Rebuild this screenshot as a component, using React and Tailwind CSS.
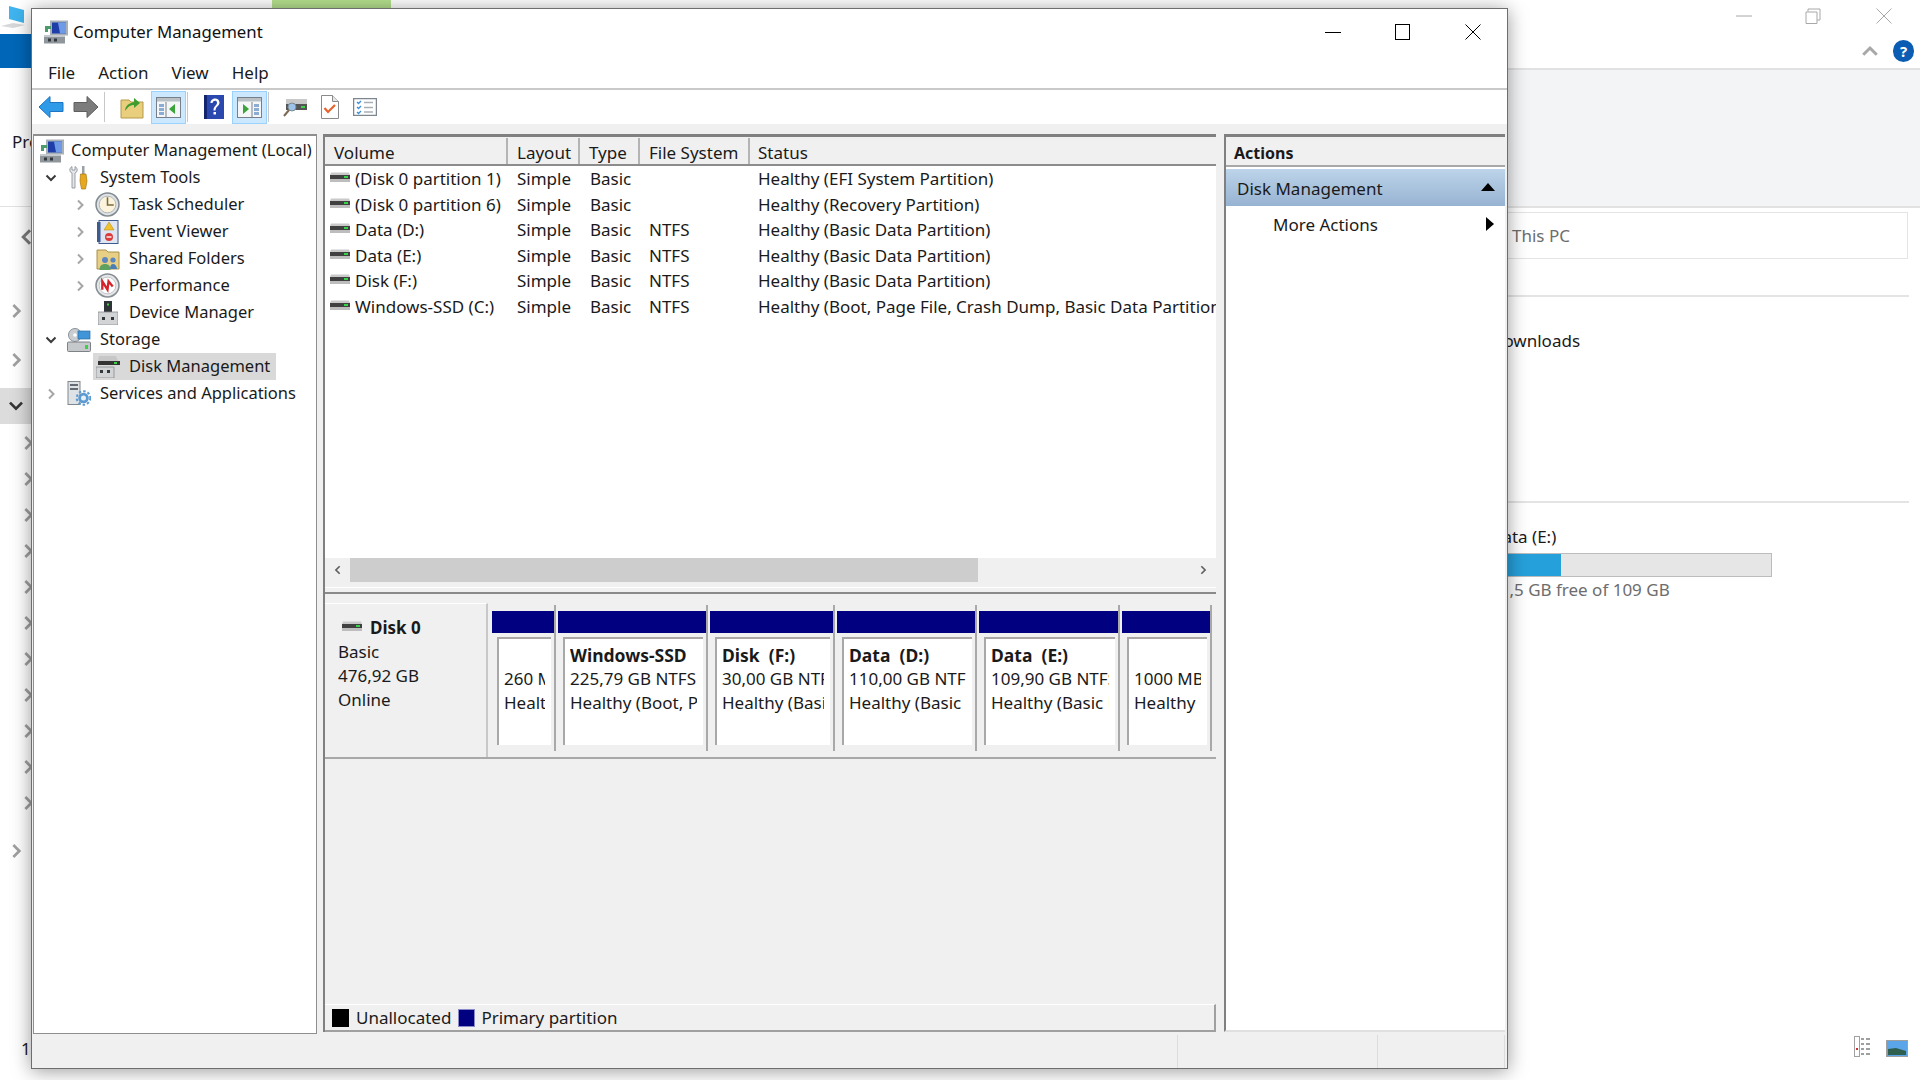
import React from 'react';

const Chevron = ({ dir = 'right', className = 'text-[#a6a6a6]', size = 12 }) => {
  const points = {
    right: '4,1.5 8.5,6 4,10.5',
    left: '8,1.5 3.5,6 8,10.5',
    down: '1.5,3.5 6,8 10.5,3.5',
    up: '1.5,8.5 6,4 10.5,8.5',
  };
  return (
    <svg width={size} height={size} viewBox="0 0 12 12" className={className}>
      <polyline points={points[dir]} fill="none" stroke="currentColor" strokeWidth="2" />
    </svg>
  );
};

const HddIcon = () => (
  <svg width="20" height="10" viewBox="0 0 20 10" className="shrink-0">
    <path d="M1 0.5h18l1 2.5H0z" fill="#c9c9c9" />
    <rect x="0" y="3" width="20" height="4" fill="#404040" />
    <rect x="0" y="7" width="20" height="3" fill="#bdbdbd" />
    <rect x="14" y="4" width="4" height="2" fill="#35d24a" />
  </svg>
);

const ComputerIcon = ({ size = 24 }) => (
  <svg width={size} height={size} viewBox="0 0 24 24" className="shrink-0">
    <rect x="6" y="0.5" width="18" height="15" fill="#a9b1b8" />
    <rect x="8" y="2.5" width="14" height="11" fill="#1f3ea8" />
    <path d="M14 2.5h8v11h-6z" fill="#6f9be6" />
    <path d="M1 6h6v3H4v3H1z" fill="#4d9a6a" />
    <rect x="0" y="15" width="21" height="8.5" fill="#8f969c" />
    <rect x="0" y="15" width="21" height="2" fill="#c4c9cd" />
    <rect x="4" y="18.5" width="3" height="3" fill="#33383c" />
    <rect x="10" y="18.5" width="3" height="3" fill="#33383c" />
  </svg>
);

const ArrowIcon = ({ dir }) => (
  <svg width="26" height="24" viewBox="0 0 26 24">
    {dir === 'left' ? (
      <path d="M1 12L12 1.5v6h13v9H12v6z" fill="#2f9be8" stroke="#1d74c4" strokeWidth="1" />
    ) : (
      <path d="M25 12L14 1.5v6H1v9h13v6z" fill="#7c7c7c" stroke="#5f5f5f" strokeWidth="1" />
    )}
  </svg>
);

const FolderUpIcon = () => (
  <svg width="24" height="24" viewBox="0 0 24 24">
    <path d="M1 5h8l2 2h12v16H1z" fill="#e9cf7d" stroke="#b59a4b" strokeWidth="1" />
    <path d="M5 16c0-5 4-8 9-9V3l6 5-6 5v-3c-4 0-6 2-9 6z" fill="#3e9d2f" />
  </svg>
);

const PaneIcon = ({ side }) => (
  <svg width="25" height="21" viewBox="0 0 25 21">
    <rect x="0.5" y="0.5" width="24" height="20" fill="#f4f6f7" stroke="#77808a" />
    <rect x="1" y="1" width="23" height="3.5" fill="#b9c0c6" />
    {side === 'left' ? (
      <>
        <rect x="3" y="7" width="5" height="3" fill="#8dacd2" />
        <rect x="3" y="11" width="5" height="3" fill="#8dacd2" />
        <rect x="3" y="15" width="5" height="3" fill="#8dacd2" />
        <line x1="10" y1="5" x2="10" y2="20" stroke="#77808a" />
        <path d="M19 7v10l-6-5z" fill="#3aa33a" />
      </>
    ) : (
      <>
        <rect x="17" y="7" width="5" height="3" fill="#8dacd2" />
        <rect x="17" y="11" width="5" height="3" fill="#8dacd2" />
        <rect x="17" y="15" width="5" height="3" fill="#8dacd2" />
        <line x1="15" y1="5" x2="15" y2="20" stroke="#77808a" />
        <path d="M6 7v10l6-5z" fill="#3aa33a" />
      </>
    )}
  </svg>
);

const HelpIcon = () => (
  <svg width="20" height="24" viewBox="0 0 20 24">
    <rect width="20" height="24" fill="#2a48ad" />
    <rect x="0" y="0" width="3" height="24" fill="#12256e" />
    <path d="M6.5 8c0-6 9-6 9-.5 0 4-4 3.500-4 8h-2c0-5 3.500-4.500 3.500-8 0-2.500-4-2.500-4.500.5z" fill="#fff" />
    <rect x="9.500" y="17" width="2.500" height="2.500" fill="#fff" />
  </svg>
);

const DiskScanIcon = () => (
  <svg width="24" height="22" viewBox="0 0 24 22">
    <rect x="3" y="3" width="21" height="5" fill="#c9c9c9" />
    <rect x="3" y="8" width="21" height="6" fill="#555" />
    <rect x="18" y="10" width="4" height="2" fill="#3fd04a" />
    <circle cx="9" cy="11" r="4" fill="#9cc4e8" stroke="#7b8a96" />
    <line x1="6" y1="14" x2="1" y2="20" stroke="#7d6a52" strokeWidth="2" />
  </svg>
);

const DocCheckIcon = () => (
  <svg width="18" height="24" viewBox="0 0 18 24">
    <path d="M0.500 0.500h11l6 6v17H0.500z" fill="#fff" stroke="#8a8a8a" />
    <path d="M11.500 0.500v6h6" fill="#e6e6e6" stroke="#8a8a8a" />
    <path d="M3.500 13l3.500 4 7-7" fill="none" stroke="#e8622c" strokeWidth="2.200" />
  </svg>
);

const ListCheckIcon = () => (
  <svg width="24" height="18" viewBox="0 0 24 18">
    <rect x="0.500" y="0.500" width="23" height="17" fill="#fff" stroke="#7d868f" strokeWidth="1.500" />
    <path d="M4 4l1.500 1.500L8 3M4 9l1.500 1.500L8 8M4 14l1.500 1.500L8 13" fill="none" stroke="#3b8fd8" strokeWidth="1.300" />
    <path d="M11 4.500h9M11 9.500h9M11 14h9" stroke="#a8b0b6" strokeWidth="1.300" />
  </svg>
);

const ToolsIcon = () => (
  <svg width="20" height="25" viewBox="0 0 20 25" className="shrink-0">
    <path d="M3 1.500a4 4 0 0 0-2 5l2 1.500v15h3V8l2-1.500a4 4 0 0 0-2-5V5H3z" fill="#e4e6e8" stroke="#848b92" strokeWidth="0.800" />
    <rect x="13" y="1" width="2.500" height="8" fill="#9aa0a6" />
    <path d="M11.500 9h5.500l1 7-1.500 8h-4l-1.500-8z" fill="#e8a81e" stroke="#a8770f" strokeWidth="0.700" />
  </svg>
);

const ClockIcon = () => (
  <svg width="25" height="25" viewBox="0 0 24 24" className="shrink-0">
    <circle cx="12" cy="12" r="11" fill="#dfe3e6" stroke="#838b92" strokeWidth="1.500" />
    <circle cx="12" cy="12" r="8" fill="#fbf3dc" stroke="#a4abb0" strokeWidth="0.800" />
    <path d="M12 5v7.500h6" fill="none" stroke="#7a6a3a" strokeWidth="1.500" />
  </svg>
);

const EventIcon = () => (
  <svg width="22" height="24" viewBox="0 0 22 24" className="shrink-0">
    <rect x="2" y="0.500" width="19" height="23" fill="#dfe6f2" stroke="#3e5a8e" />
    <rect x="0" y="2" width="3.500" height="20" fill="#3e5a8e" />
    <path d="M12 2l5 8H7z" fill="#f2c22c" stroke="#a8820f" strokeWidth="0.500" />
    <circle cx="12" cy="17" r="4" fill="#dc3b3b" />
    <rect x="9.500" y="16.300" width="5" height="1.400" fill="#fff" />
  </svg>
);

const SharedIcon = () => (
  <svg width="24" height="24" viewBox="0 0 24 24" className="shrink-0">
    <path d="M1 3h9l2 2h11v17H1z" fill="#e7cf85" stroke="#a8904a" />
    <circle cx="9" cy="13" r="3" fill="#5b86c0" />
    <path d="M3.500 23c0-4 2-6 5.500-6s5.500 2 5.500 6z" fill="#5fa25f" />
    <circle cx="17" cy="13" r="2.600" fill="#5b86c0" />
    <path d="M14 22c0-3 1-5 3-5s4 2 4 5z" fill="#4a7fb5" />
  </svg>
);

const PerfIcon = () => (
  <svg width="25" height="25" viewBox="0 0 24 24" className="shrink-0">
    <circle cx="12" cy="12" r="11" fill="#e4e6e8" stroke="#868d93" strokeWidth="1.500" />
    <circle cx="12" cy="12" r="8" fill="#fff" stroke="#b0b5b9" strokeWidth="0.700" />
    <path d="M7 16V8l5 8 1-8 4 5" fill="none" stroke="#d4232a" strokeWidth="2.200" />
  </svg>
);

const DeviceIcon = () => (
  <svg width="20" height="24" viewBox="0 0 20 24" className="shrink-0">
    <rect x="6" y="0" width="8" height="11" fill="#2f3338" />
    <rect x="9" y="2.500" width="2" height="2" fill="#3fd04a" />
    <path d="M0 11h20v13H0z" fill="#d2d4d6" stroke="#868a8e" strokeWidth="0.800" />
    <rect x="4" y="16" width="3" height="3" fill="#33383c" />
    <rect x="13" y="16" width="3" height="3" fill="#33383c" />
  </svg>
);

const StorageIcon = () => (
  <svg width="24" height="24" viewBox="0 0 24 24" className="shrink-0">
    <circle cx="8" cy="7" r="6.500" fill="#c9ced2" stroke="#8a9096" />
    <circle cx="8" cy="7" r="1.800" fill="#fff" />
    <rect x="11" y="3" width="12" height="8" fill="#3f95d8" stroke="#2a6ea6" strokeWidth="0.700" />
    <rect x="0.500" y="14" width="23" height="9.500" rx="1" fill="#c6c9cc" stroke="#7d8287" />
    <rect x="18" y="17" width="3" height="4" fill="#3fd04a" />
  </svg>
);

const DiskMgmtIcon = () => (
  <svg width="24" height="22" viewBox="0 0 24 22" className="shrink-0">
    <path d="M3 0h17l2 5H2z" fill="#c7c7c7" />
    <rect x="2" y="5" width="22" height="4" fill="#333" />
    <rect x="18" y="6" width="3" height="2" fill="#3fd04a" />
    <path d="M0 11h18v11H0z" fill="#d2d4d6" stroke="#868a8e" strokeWidth="0.800" />
    <rect x="4" y="14" width="3" height="3" fill="#33383c" />
    <rect x="11" y="14" width="3" height="3" fill="#33383c" />
  </svg>
);

const ServicesIcon = () => (
  <svg width="24" height="25" viewBox="0 0 24 25" className="shrink-0">
    <rect x="1" y="0.500" width="12" height="23" fill="#dfe3e6" stroke="#80878d" />
    <rect x="3" y="3" width="8" height="2" fill="#646b72" />
    <rect x="3" y="7" width="8" height="2" fill="#646b72" />
    <circle cx="16.500" cy="17" r="6.800" fill="none" stroke="#5c9ad2" strokeWidth="2" strokeDasharray="2.500 2" />
    <circle cx="16.500" cy="17" r="5.300" fill="#5c9ad2" />
    <circle cx="16.500" cy="17" r="2.500" fill="#e6f0f8" />
  </svg>
);

const TreeRow = ({ level, expander, icon, label, selected }) => {
  const indent = { 1: 'pl-[11px]', 2: 'pl-[40px]' }[level];
  return (
    <div className={`flex h-[27px] items-center ${indent}`}>
      <span className="flex w-[12px] shrink-0 justify-center">
        {expander === 'open' && <Chevron dir="down" className="text-[#3a3a3a]" />}
        {expander === 'closed' && <Chevron dir="right" />}
      </span>
      <div className={`ml-[7px] flex h-[27px] items-center pr-[6px] ${selected ? 'bg-[#d9d9d9]' : ''}`}>
        <span className="flex w-[28px] shrink-0 justify-center pl-[1px]">{icon}</span>
        <span className="ml-[8px] whitespace-nowrap">{label}</span>
      </div>
    </div>
  );
};

const TreePane = () => (
  <div className="h-[900px] w-[284px] shrink-0 overflow-hidden border border-t-2 border-[#8f8f8f] bg-white pt-[1px] text-[16.5px]">
    <div className="flex h-[27px] items-center pl-[6px]">
      <ComputerIcon />
      <span className="ml-[7px] whitespace-nowrap">Computer Management (Local)</span>
    </div>
    <TreeRow level={1} expander="open" icon={<ToolsIcon />} label="System Tools" />
    <TreeRow level={2} expander="closed" icon={<ClockIcon />} label="Task Scheduler" />
    <TreeRow level={2} expander="closed" icon={<EventIcon />} label="Event Viewer" />
    <TreeRow level={2} expander="closed" icon={<SharedIcon />} label="Shared Folders" />
    <TreeRow level={2} expander="closed" icon={<PerfIcon />} label="Performance" />
    <TreeRow level={2} icon={<DeviceIcon />} label="Device Manager" />
    <TreeRow level={1} expander="open" icon={<StorageIcon />} label="Storage" />
    <TreeRow level={2} icon={<DiskMgmtIcon />} label="Disk Management" selected />
    <TreeRow level={1} expander="closed" icon={<ServicesIcon />} label="Services and Applications" />
  </div>
);

const volumes = [
  ['(Disk 0 partition 1)', '', 'Healthy (EFI System Partition)'],
  ['(Disk 0 partition 6)', '', 'Healthy (Recovery Partition)'],
  ['Data (D:)', 'NTFS', 'Healthy (Basic Data Partition)'],
  ['Data (E:)', 'NTFS', 'Healthy (Basic Data Partition)'],
  ['Disk (F:)', 'NTFS', 'Healthy (Basic Data Partition)'],
  ['Windows-SSD (C:)', 'NTFS', 'Healthy (Boot, Page File, Crash Dump, Basic Data Partition)'],
];

const partitions = [
  { width: 'w-[66px]', name: '', size: '260 MB', status: 'Healthy (EFI System Partition)' },
  { width: 'w-[152px]', name: 'Windows-SSD', size: '225,79 GB NTFS', status: 'Healthy (Boot, Page File, Crash Dump)' },
  { width: 'w-[127px]', name: 'Disk  (F:)', size: '30,00 GB NTFS', status: 'Healthy (Basic Data Partition)' },
  { width: 'w-[142px]', name: 'Data  (D:)', size: '110,00 GB NTFS', status: 'Healthy (Basic Data Partition)' },
  { width: 'w-[143px]', name: 'Data  (E:)', size: '109,90 GB NTFS', status: 'Healthy (Basic Data Partition)' },
  { width: 'w-[92px]', name: '', size: '1000 MB', status: 'Healthy' },
];

const headerCell = 'flex h-[26px] items-center border-r-2 border-[#b4b4b4] pl-[9px] pt-[2px]';

const VolumeList = () => (
  <div className="flex h-[421px] flex-col overflow-hidden bg-white">
    <div className="grid shrink-0 grid-cols-[183px_72px_60px_110px_1fr] border-b-2 border-[#8c8c8c] bg-[#f0f0f0] pt-[1px] leading-none">
      <div className={headerCell}>Volume</div>
      <div className={headerCell}>Layout</div>
      <div className={headerCell}>Type</div>
      <div className={headerCell}>File System</div>
      <div className="flex h-[26px] items-center pl-[8px] pt-[2px]">Status</div>
    </div>
    <div>
      {volumes.map(([name, fs, status]) => (
        <div key={name} className="grid h-[25.5px] grid-cols-[183px_72px_60px_110px_1fr] items-center whitespace-nowrap">
          <div className="flex items-center pl-[5px]">
            <span className="-mt-[3px]"><HddIcon /></span>
            <span className="ml-[5px]">{name}</span>
          </div>
          <div className="pl-[9px]">Simple</div>
          <div className="pl-[10px]">Basic</div>
          <div className="pl-[9px]">{fs}</div>
          <div className="pl-[8px]">{status}</div>
        </div>
      ))}
    </div>
  </div>
);

const ScrollBar = () => (
  <div className="shrink-0 bg-[#f0f0f0]">
    <div className="flex h-[24px] items-center">
      <span className="flex w-[25px] justify-center"><Chevron dir="left" className="text-[#606060]" size={10} /></span>
      <div className="h-[24px] w-[628px] bg-[#cdcdcd]" />
      <span className="ml-auto flex w-[26px] justify-center"><Chevron dir="right" className="text-[#606060]" size={10} /></span>
    </div>
    <div className="h-[5px]" />
    <div className="h-[5px] border-t border-white" />
    <div className="h-[2px] bg-[#8a8a8a]" />
  </div>
);

const PartitionCell = ({ width, name, size, status }) => (
  <div className={`flex shrink-0 flex-col border-r-2 border-[#a9a9a9] pt-[6px] ${width}`}>
    <div className="ml-[2px] h-[22px] shrink-0 bg-[#000080]" />
    <div className="mb-[6px] ml-[7px] mr-[3px] mt-[4px] flex-1 border-l-2 border-t-2 border-[#a8a8a8] bg-white pl-[5px] pr-[6px] pt-[4px]">
      <div className="overflow-hidden whitespace-pre leading-[24px]">
        <div className="h-[24px] text-[17.5px] font-bold">{name}</div>
        <div>{size}</div>
        <div>{status}</div>
      </div>
    </div>
  </div>
);

const DiskView = () => (
  <div className="flex flex-1 flex-col bg-[#f0f0f0]">
    <div className="mt-[9px] flex h-[156px] shrink-0 border-b-2 border-[#a8a8a8]">
      <div className="w-[163px] shrink-0 border-r-2 border-t border-r-[#c8c8c8] border-t-white pl-[13px] pt-[12px] leading-[24px]">
        <div className="flex items-center">
          <span className="ml-[4px] -mt-[5px]"><HddIcon /></span>
          <span className="ml-[8px] font-bold">Disk 0</span>
        </div>
        <div>Basic</div>
        <div>476,92 GB</div>
        <div>Online</div>
      </div>
      <div className="flex h-[148px] pl-[2px] pt-[2px]">
        {partitions.map((p, i) => (
          <PartitionCell key={i} {...p} />
        ))}
      </div>
    </div>
    <div className="flex-1" />
    <div className="flex h-[28px] shrink-0 items-center border-b-2 border-r-2 border-t border-b-[#a0a0a0] border-r-[#a0a0a0] border-t-white pl-[7px]">
      <span className="h-[18px] w-[17px] bg-black" />
      <span className="ml-[7px]">Unallocated</span>
      <span className="ml-[7px] h-[18px] w-[17px] border border-[#8a8ac8] bg-[#000080]" />
      <span className="ml-[6px]">Primary partition</span>
    </div>
  </div>
);

const MiddlePane = () => (
  <div className="ml-[6px] flex h-[898px] w-[893px] shrink-0 flex-col overflow-hidden border-l-2 border-t-[3px] border-[#808080]">
    <VolumeList />
    <ScrollBar />
    <DiskView />
  </div>
);

const ActionsPane = () => (
  <div className="ml-[8px] flex h-[898px] w-[281px] shrink-0 flex-col border-b-2 border-l-2 border-t-[3px] border-b-[#e0e0e0] border-l-[#808080] border-t-[#808080] bg-white">
    <div className="flex h-[30px] shrink-0 items-center border-b-2 border-[#a8a8a8] bg-[#f0f0f0] pl-[8px] pt-[3px] text-[16px] font-bold">Actions</div>
    <div className="mt-[2px] flex h-[37px] shrink-0 items-center justify-between bg-gradient-to-b from-[#bdd4ea] to-[#97b3d2] pl-[11px] pr-[10px] pt-[2px]">
      <span>Disk Management</span>
      <svg width="14" height="8" viewBox="0 0 14 8" className="-mt-[3px]"><path d="M7 0l7 8H0z" fill="#000" /></svg>
    </div>
    <div className="flex h-[38px] shrink-0 items-center justify-between pl-[47px] pr-[11px]">
      <span>More Actions</span>
      <svg width="8" height="14" viewBox="0 0 8 14" className="-mt-[3px]"><path d="M0 0l8 7-8 7z" fill="#000" /></svg>
    </div>
  </div>
);

const ToolButton = ({ children, active }) => (
  <div className={`flex h-[33px] w-[35px] shrink-0 items-center justify-center ${active ? 'border border-[#99d1ff] bg-[#cce8ff]' : ''}`}>
    {children}
  </div>
);

const Toolbar = () => (
  <div className="flex h-[34px] shrink-0 items-center bg-white pl-[1px]">
    <ToolButton><ArrowIcon dir="left" /></ToolButton>
    <ToolButton><ArrowIcon dir="right" /></ToolButton>
    <div className="ml-[1px] h-[30px] w-[1px] bg-[#c8c8c8]" />
    <div className="ml-[9px]"><ToolButton><FolderUpIcon /></ToolButton></div>
    <div className="ml-[2px]"><ToolButton active><PaneIcon side="left" /></ToolButton></div>
    <div className="ml-[1px] h-[30px] w-[1px] bg-[#c8c8c8]" />
    <div className="ml-[8px]"><ToolButton><HelpIcon /></ToolButton></div>
    <div className="ml-[1px]"><ToolButton active><PaneIcon side="right" /></ToolButton></div>
    <div className="ml-[1px] h-[30px] w-[1px] bg-[#c8c8c8]" />
    <div className="ml-[8px]"><ToolButton><DiskScanIcon /></ToolButton></div>
    <ToolButton><DocCheckIcon /></ToolButton>
    <ToolButton><ListCheckIcon /></ToolButton>
  </div>
);

const TitleBar = () => (
  <div className="flex h-[49px] shrink-0 items-center bg-white pb-[3px] pl-[12px]">
    <ComputerIcon />
    <span className="ml-[5px] text-[16.8px] text-[#111]">Computer Management</span>
    <div className="ml-auto flex items-center pr-[26px]">
      <svg width="16" height="16" viewBox="0 0 16 16"><line x1="0" y1="8.500" x2="16" y2="8.500" stroke="#000" /></svg>
      <svg width="16" height="16" viewBox="0 0 16 16" className="ml-[54px]"><rect x="0.500" y="0.500" width="14" height="15" fill="none" stroke="#000" /></svg>
      <svg width="16" height="16" viewBox="0 0 16 16" className="ml-[54px]"><path d="M0.500 0.500l15 15M15.500 0.500l-15 15" stroke="#000" /></svg>
    </div>
  </div>
);

const MenuBar = () => (
  <div className="flex h-[32px] shrink-0 items-center gap-[23px] border-b-2 border-[#c9c9c9] bg-white pb-[1px] pl-[16px]">
    <span>File</span>
    <span>Action</span>
    <span>View</span>
    <span>Help</span>
  </div>
);

const ManagementWindow = () => (
  <div className="absolute left-[31px] top-[8px] flex h-[1061px] w-[1477px] flex-col overflow-hidden border border-[#6e6e6e] bg-[#f0f0f0] text-[17px] text-[#1a1a1a] shadow-[0_2px_18px_rgba(0,0,0,0.4)]">
    <TitleBar />
    <MenuBar />
    <Toolbar />
    <div className="flex flex-1 pl-[1px] pt-[10px]">
      <TreePane />
      <MiddlePane />
      <ActionsPane />
    </div>
    <div className="flex h-[33px] shrink-0 justify-end">
      <div className="w-[200px] border-l border-[#dcdcdc]" />
      <div className="w-[128px] border-l border-r border-[#dcdcdc]" />
      <div className="w-[2px]" />
    </div>
  </div>
);

const BackgroundWindow = () => (
  <div className="flex h-full flex-col text-[17px] leading-[24px] text-[#1a1a1a]">
    <div className="flex h-[34px] shrink-0">
      <svg width="26" height="28" viewBox="0 0 26 28" className="mt-[3px] shrink-0">
        <path d="M9 3l15 4v13l-15-4z" fill="#3fb4ee" />
        <path d="M1 23l12-3 12 2-12 3z" fill="#d6d8da" />
      </svg>
      <div className="ml-[246px] h-[8px] w-[119px] bg-[#b5e08d]" />
      <div className="ml-auto flex items-start pr-[28px] pt-[8px]">
        <svg width="16" height="16" viewBox="0 0 16 16"><line x1="0" y1="8" x2="16" y2="8" stroke="#a8a8a8" /></svg>
        <svg width="16" height="16" viewBox="0 0 16 16" className="ml-[53px]"><path d="M3 3.500V1h12v11h-3M1 4h11v11.500H1z" fill="none" stroke="#a8a8a8" /></svg>
        <svg width="16" height="16" viewBox="0 0 16 16" className="ml-[55px]"><path d="M0.500 0.500l15 15M15.500 0.500l-15 15" stroke="#a8a8a8" /></svg>
      </div>
    </div>
    <div className="flex h-[34px] shrink-0 items-center">
      <div className="h-[34px] w-[60px] bg-[#0067b8]" />
      <div className="ml-auto flex items-center pr-[6px]">
        <Chevron dir="up" className="text-[#a8a8a8]" size={18} />
        <span className="ml-[14px] flex h-[22px] w-[21px] items-center justify-center rounded-full bg-[#0a5db3] text-[15px] font-bold text-white">?</span>
      </div>
    </div>
    <div className="flex flex-1">
      <div className="w-[200px] shrink-0">
        <div className="h-[138px] pl-[12px] pt-[62px]">Properties</div>
        <div className="h-[1px] bg-[#e2e2e2]" />
        <div className="pl-[18px] pt-[21px]"><Chevron dir="left" className="text-[#7a7a7a]" size={18} /></div>
        <div className="pl-[8px] pt-[57px]"><Chevron dir="right" className="text-[#a0a0a0]" size={16} /></div>
        <div className="pl-[8px] pt-[33px]"><Chevron dir="right" className="text-[#a0a0a0]" size={16} /></div>
        <div className="mt-[20px] flex h-[36px] w-[60px] items-center bg-[#dcdcdc] pl-[8px]"><Chevron dir="down" className="text-[#333]" size={16} /></div>
        <div className="flex flex-col gap-[20px] pl-[20px] pt-[11px]">
          {[1, 2, 3, 4, 5, 6, 7, 8, 9, 10, 11].map((n) => (
            <Chevron key={n} dir="right" className="text-[#a0a0a0]" size={16} />
          ))}
        </div>
        <div className="pl-[8px] pt-[32px]"><Chevron dir="right" className="text-[#a0a0a0]" size={16} /></div>
        <div className="pl-[21px] pt-[178px]">1</div>
      </div>
      <div className="flex-1">
        <div className="h-[138px] border-t-2 border-[#e2e2e2] bg-[#f3f4f6]" />
        <div className="border-t-2 border-[#e2e2e2] pt-[4px]">
          <div className="ml-auto mr-[12px] flex h-[47px] w-[600px] items-center border border-[#e4e4e4] pl-[203px] text-[#6d6d6d]">This PC</div>
        </div>
        <div className="mr-[11px] mt-[36px] border-t-2 border-[#e4e4e4]" />
        <div className="pl-[1291px] pt-[32px]">Downloads</div>
        <div className="mr-[11px] mt-[148px] border-t-2 border-[#e4e4e4]" />
        <div className="pl-[1290px] pt-[22px]">Data (E:)</div>
        <div className="ml-[1290px] mt-[4px] h-[24px] w-[282px] border border-[#bcbcbc] bg-[#e6e6e6]">
          <div className="h-full w-[70px] bg-[#26a0da]" />
        </div>
        <div className="pl-[1290px] pt-[1px] text-[#6d6d6d]">81,5 GB free of 109 GB</div>
        <div className="flex items-end justify-end gap-[12px] pr-[12px] pt-[434px]">
          <svg width="20" height="21" viewBox="0 0 20 21">
            <rect x="0.500" y="0.500" width="5" height="20" fill="#fff" stroke="#a0a0a0" />
            <rect x="2" y="12" width="2" height="2" fill="#c8322a" />
            <path d="M7 3h3M12 3h4M7 8h3M12 8h4M7 13h3M12 13h4M7 18h3M12 18h4" stroke="#808080" strokeWidth="1.500" />
          </svg>
          <svg width="22" height="17" viewBox="0 0 22 17">
            <rect x="0.500" y="0.500" width="21" height="16" fill="#5aa6e8" stroke="#a0a0a0" />
            <path d="M2 9l8-1 10 3v4H2z" fill="#2f5f4e" />
          </svg>
        </div>
      </div>
    </div>
  </div>
);

const App = () => (
  <div className="relative h-[1080px] w-[1920px] overflow-hidden bg-white font-['Noto_Sans',sans-serif]">
    <BackgroundWindow />
    <ManagementWindow />
  </div>
);

export default App;
